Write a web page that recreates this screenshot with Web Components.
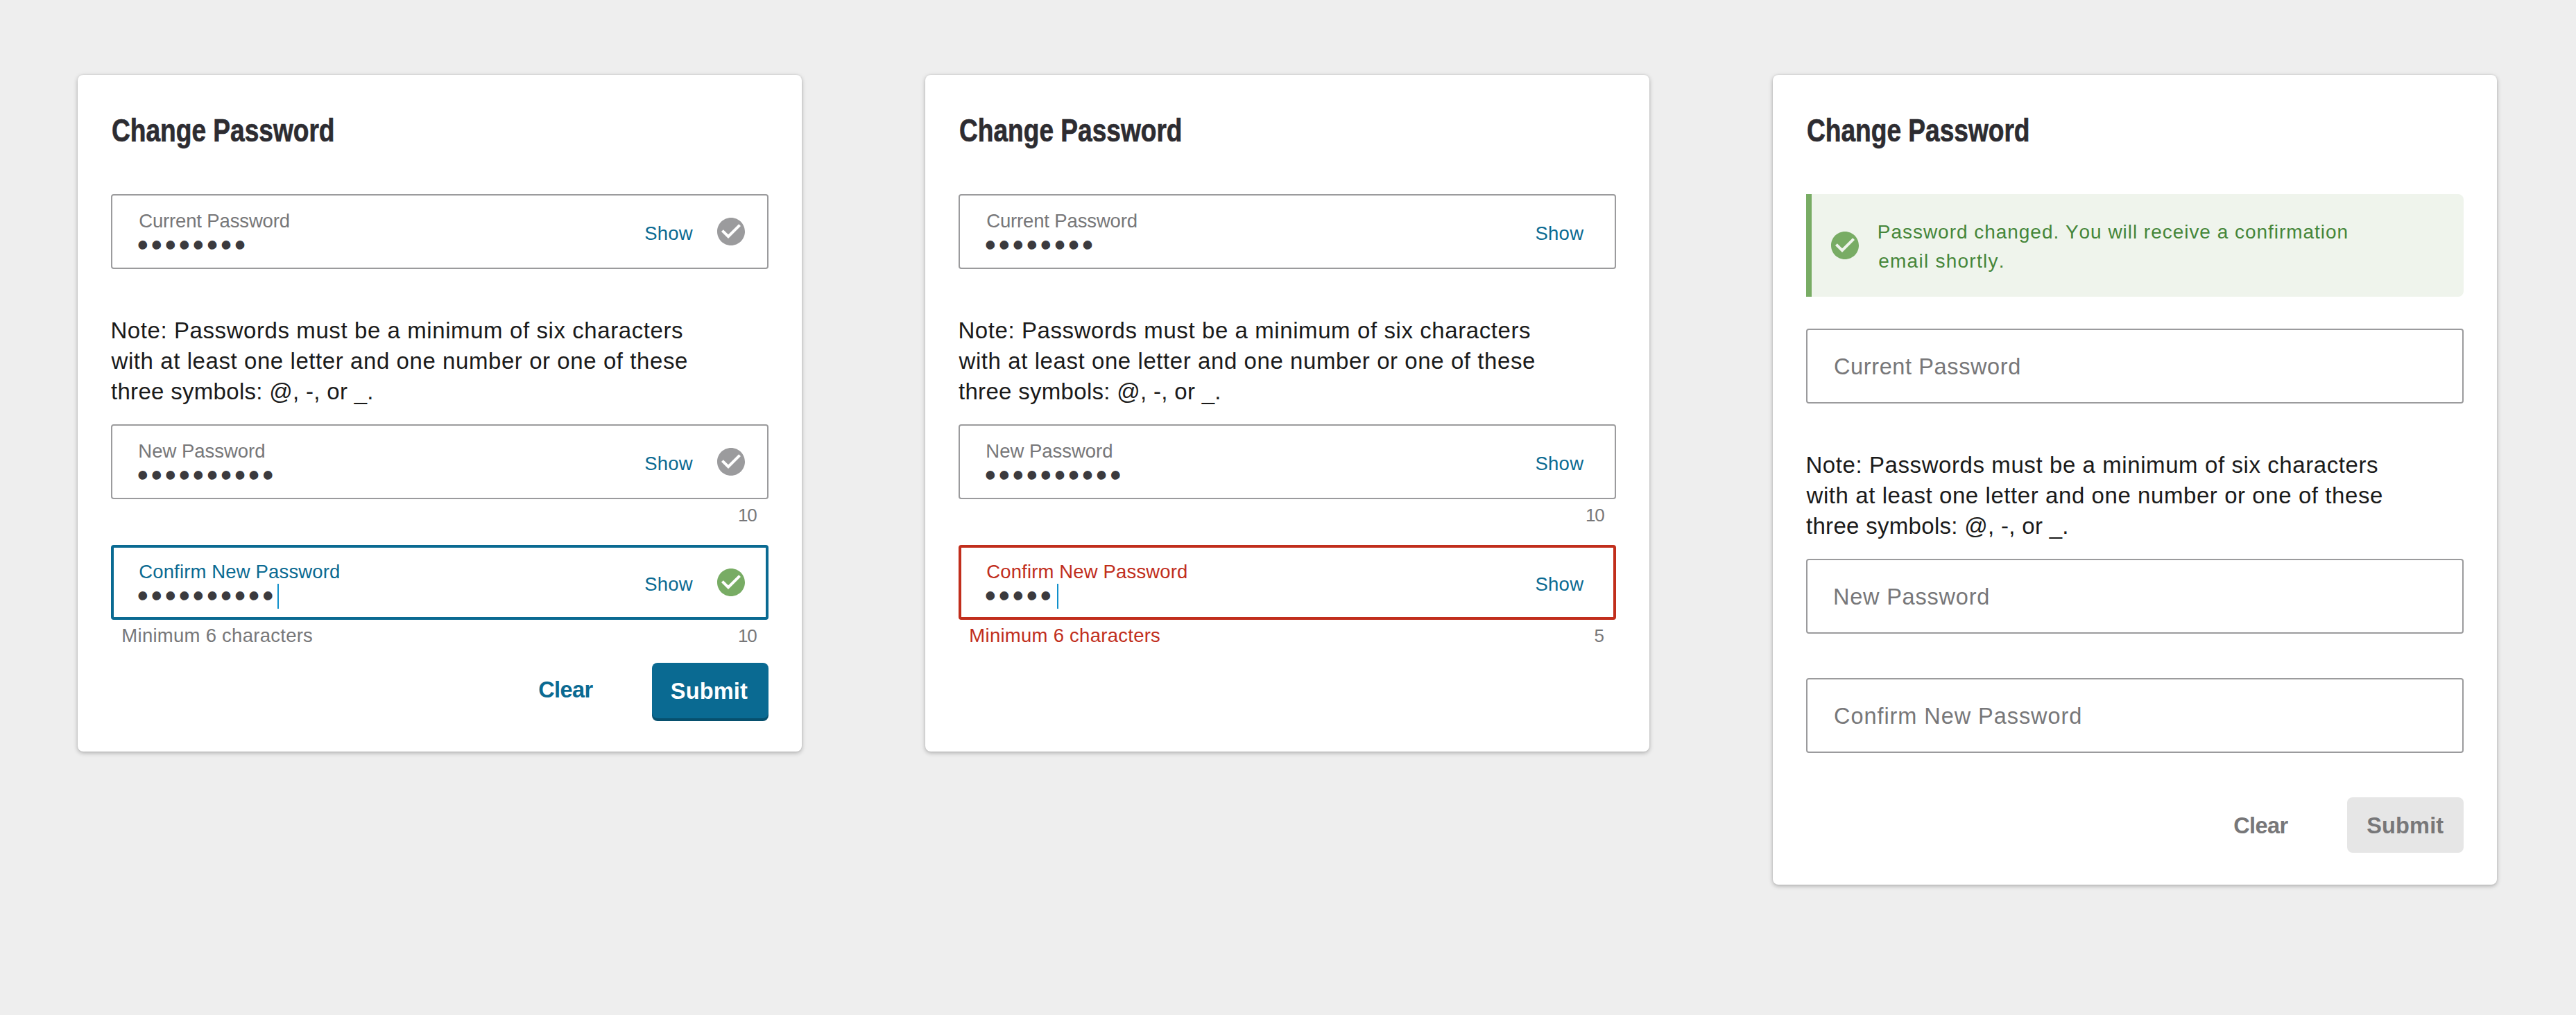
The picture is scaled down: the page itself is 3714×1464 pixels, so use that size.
<!DOCTYPE html>
<html lang="en">
<head>
<meta charset="utf-8">
<title>Change Password</title>
<style>
html,body{margin:0;padding:0}
body{background:#eee;font-family:"Liberation Sans",Arial,sans-serif;width:3714px;height:1464px;overflow:hidden}
main{display:flex;align-items:flex-start;gap:178px;padding:108px 112px 0}
</style>
</head>
<body>
<main>
  <password-card style="height:976px">
    <password-field label="Current Password" label-width="215" dots="8" show icon="#9b9b9d"></password-field>
    <password-note></password-note>
    <password-field label="New Password" label-width="179.5" dots="10" show icon="#9b9b9d"></password-field>
    <field-foot count="10"></field-foot>
    <password-field label="Confirm New Password" label-width="287.3" dots="10" caret="-0.5" show icon="#78ac64" style="--line:#0a6a92;--b:4px;--label:#0a6a92"></password-field>
    <field-foot count="10" hint="Minimum 6 characters" style="height:62px"></field-foot>
    <form-actions style="--clear:#0a6a92;--clear-lh:79px"></form-actions>
  </password-card>
  <password-card style="height:976px">
    <password-field label="Current Password" label-width="215" dots="8" show></password-field>
    <password-note></password-note>
    <password-field label="New Password" label-width="179.5" dots="10" show></password-field>
    <field-foot count="10"></field-foot>
    <password-field label="Confirm New Password" label-width="287.3" dots="5" caret="1.8" show style="--line:#c12e1c;--b:4px;--label:#c12e1c"></password-field>
    <field-foot count="5" hint="Minimum 6 characters" style="--hint:#c12e1c"></field-foot>
  </password-card>
  <password-card style="height:1168px">
    <success-alert></success-alert>
    <password-field label="Current Password" label-width="266"></password-field>
    <password-note></password-note>
    <password-field label="New Password" label-width="221" style="margin-bottom:64px"></password-field>
    <password-field label="Confirm New Password" label-width="354" style="margin-bottom:64px"></password-field>
    <form-actions disabled style="--clear:#777779"></form-actions>
  </password-card>
</main>
<script>
const ctx = document.createElement('canvas').getContext('2d');

/* One line of type tracked (or condensed) to a given ink width. */
class TypeLine extends HTMLElement {
  connectedCallback() {
    const text = this.getAttribute('text');
    const root = this.attachShadow({mode: 'open'});
    root.innerHTML = '<style>:host{display:block;white-space:nowrap;font-kerning:none;font-variant-ligatures:none}span{display:inline-block;transform-origin:0 50%}</style><span></span>';
    const span = root.querySelector('span');
    span.textContent = text;
    const cs = getComputedStyle(this);
    /* Side bearings are read at 1000px and scaled down, which keeps their fractions. */
    const size = parseFloat(cs.fontSize);
    ctx.font = `${cs.fontWeight} 1000px "Liberation Sans"`;
    ctx.fontKerning = 'none';
    const m = ctx.measureText(text);
    const lsb = -m.actualBoundingBoxLeft * size / 1000;
    const rsb = (m.width - m.actualBoundingBoxRight) * size / 1000;
    const ink = span.getBoundingClientRect().width - lsb - rsb;
    const target = parseFloat(this.getAttribute('w'));
    if (this.hasAttribute('condense')) {
      const k = target / ink;
      span.style.transform = `scaleX(${k})`;
      span.style.marginLeft = (-lsb * k) + 'px';
    } else {
      const ls = (target - ink) / (text.length - 1);
      span.style.letterSpacing = ls + 'px';
      span.style.marginLeft = -lsb + 'px';
      span.style.marginRight = (-ls - rsb) + 'px';
    }
  }
}

class CheckBadge extends HTMLElement {
  connectedCallback() {
    this.attachShadow({mode: 'open'}).innerHTML = `<style>:host{display:block;flex:none;width:40px;height:40px}svg{display:block}</style>
      <svg width="40" height="40" viewBox="2 2 20 20"><path fill="${this.getAttribute('color')}" d="M12 2C6.48 2 2 6.48 2 12s4.48 10 10 10 10-4.48 10-10S17.52 2 12 2zm-2 15l-5-5 1.41-1.41L10 14.17l7.59-7.59L19 8l-9 9z"/></svg>`;
  }
}

class PasswordCard extends HTMLElement {
  connectedCallback() {
    this.attachShadow({mode: 'open'}).innerHTML = `<style>
      :host{display:flex;flex-direction:column;box-sizing:border-box;width:1044px;flex:none;padding:50px 48px 0;background:#fff;border-radius:8px;box-shadow:0 2px 6px rgba(0,0,0,.28),0 0 2px rgba(0,0,0,.1)}
      h2{margin:0 0 62px;padding-left:2px;font-size:46px;line-height:60px;font-weight:700;color:#2d2c31;-webkit-text-stroke:.7px #2d2c31}
      </style><h2><type-line condense text="Change Password" w="318"></type-line></h2><slot></slot>`;
  }
}

class PasswordField extends HTMLElement {
  connectedCallback() {
    const a = n => this.getAttribute(n);
    const dots = a('dots');
    const left = dots
      ? `<type-line class="label" text="${a('label')}" w="${a('label-width')}"></type-line>
         <div class="value"><span class="dots">${'•'.repeat(+dots)}</span>${a('caret') ? `<i style="margin-left:${a('caret')}px"></i>` : ''}</div>`
      : `<type-line class="empty" text="${a('label')}" w="${a('label-width')}"></type-line>`;
    this.attachShadow({mode: 'open'}).innerHTML = `<style>
      :host{display:flex;flex:none;align-items:flex-start;box-sizing:border-box;height:108px;border:var(--b,2px) solid var(--line,#9b9b9d);border-radius:4px;padding-left:calc(41.5px - var(--b,2px))}
      .left,.show,check-badge{margin-top:calc(var(--top) - var(--b,2px))}
      .left{--top:23px;flex:1}
      .label{font-size:27.5px;line-height:32px;color:var(--label,#777779)}
      .empty{font-size:32.5px;line-height:64px;color:#777779}
      .value{display:flex;height:36px;margin-top:1px}
      .dots{margin-left:-1.6px;font-size:33px;line-height:35px;letter-spacing:8.5px;color:#3b3a3e;-webkit-text-stroke:3.6px #3b3a3e}
      i{width:2px;height:36px;background:#1090cb;flex:none}
      .show{--top:41px;font-size:27.5px;line-height:32px;color:#0a6a92;margin-right:calc(46.7px - var(--b,2px))}
      .show.paired{margin-right:35px}
      check-badge{--top:34px;margin-right:calc(34px - var(--b,2px))}
      </style><div class="left">${left}</div>
      ${this.hasAttribute('show') ? `<type-line class="show${a('icon') ? ' paired' : ''}" text="Show" w="69"></type-line>` : ''}
      ${a('icon') ? `<check-badge color="${a('icon')}"></check-badge>` : ''}`;
  }
}

class FieldFoot extends HTMLElement {
  connectedCallback() {
    const hint = this.getAttribute('hint');
    const count = this.getAttribute('count');
    this.attachShadow({mode: 'open'}).innerHTML = `<style>
      :host{display:flex;flex:none;box-sizing:border-box;height:66px;padding:7px 17px 0 17.5px;justify-content:space-between;font-size:27.5px;line-height:32px;color:#777779}
      .hint{color:var(--hint,#777779)}
      .count{font-size:26px;margin-left:auto}
      </style>${hint ? `<type-line class="hint" text="${hint}" w="272.5"></type-line>` : ''}${count.length > 1 ? `<type-line class="count" text="${count}" w="25.5"></type-line>` : `<span class="count">${count}</span>`}`;
  }
}

class PasswordNote extends HTMLElement {
  connectedCallback() {
    this.attachShadow({mode: 'open'}).innerHTML = `<style>
      :host{display:block;flex:none;margin:67px 0 25px;font-size:33px;line-height:44px;color:#1a1a1a}
      type-line:first-of-type{padding-left:2px}
      </style>
      <type-line text="Note: Passwords must be a minimum of six characters" w="821.5"></type-line>
      <type-line text="with at least one letter and one number or one of these" w="830"></type-line>
      <type-line text="three symbols: @, -, or _." w="375.5"></type-line>`;
  }
}

class SuccessAlert extends HTMLElement {
  connectedCallback() {
    this.attachShadow({mode: 'open'}).innerHTML = `<style>
      :host{display:flex;flex:none;align-items:flex-start;box-sizing:border-box;height:148px;margin-bottom:46px;padding-left:28px;gap:29px;background:#eff4ec;border-left:8px solid #78ac64;border-radius:0 8px 8px 0;color:#458639;font-size:28px;line-height:42px}
      check-badge{margin-top:54px}
      div{margin-top:33.5px}
      </style><check-badge color="#78ac64"></check-badge>
      <div><type-line text="Password changed. You will receive a confirmation" w="674.5"></type-line>
      <type-line text="email shortly." w="178"></type-line></div>`;
  }
}

class FormActions extends HTMLElement {
  connectedCallback() {
    const off = this.hasAttribute('disabled');
    this.attachShadow({mode: 'open'}).innerHTML = `<style>
      :host{display:flex;flex:none;font-size:32.5px;font-weight:700}
      .clear{flex:1;padding-left:617.3px;line-height:var(--clear-lh,83px);height:80px;color:var(--clear)}
      .submit{box-sizing:border-box;flex:none;width:168px;height:80px;border-radius:8px;line-height:83px;padding-left:${off ? 28.7 : 27.3}px;background:${off ? '#e6e6e6' : '#0a6a92'};color:${off ? '#777779' : '#fff'};box-shadow:${off ? 'none' : '0 4px 0 #07506e'}}
      </style><type-line class="clear" text="Clear" w="77.3"></type-line>
      <type-line class="submit" text="Submit" w="110.3"></type-line>`;
  }
}

customElements.define('type-line', TypeLine);
customElements.define('check-badge', CheckBadge);
customElements.define('password-card', PasswordCard);
customElements.define('password-field', PasswordField);
customElements.define('field-foot', FieldFoot);
customElements.define('password-note', PasswordNote);
customElements.define('success-alert', SuccessAlert);
customElements.define('form-actions', FormActions);
</script>
</body>
</html>
